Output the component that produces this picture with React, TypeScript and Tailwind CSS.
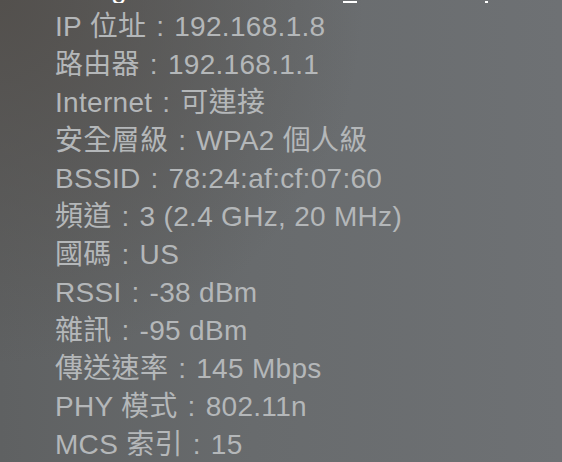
const ROWS: [string, string][] = [
  ["IP 位址", "192.168.1.8"],
  ["路由器", "192.168.1.1"],
  ["Internet", "可連接"],
  ["安全層級", "WPA2 個人級"],
  ["BSSID", "78:24:af:cf:07:60"],
  ["頻道", "3 (2.4 GHz, 20 MHz)"],
  ["國碼", "US"],
  ["RSSI", "-38 dBm"],
  ["雜訊", "-95 dBm"],
  ["傳送速率", "145 Mbps"],
  ["PHY 模式", "802.11n"],
  ["MCS 索引", "15"],
];

export default function App() {
  return (
    <div
      className="w-[562px] h-[462px] overflow-hidden bg-[radial-gradient(circle_at_0%_0%,#53504d_0%,rgba(83,80,77,0)_50%),linear-gradient(90deg,#5f6162_0%,#686b6d_45%,#6e7174_100%)]"
      style={{ fontFamily: '"Liberation Sans", "Noto Sans CJK TC", sans-serif' }}
    >
      {/* network name row, cut off by the crop */}
      <div className="h-[3px] overflow-hidden flex items-end">
        <div className="flex items-end w-full text-[28px] leading-[28px] text-white">
          <span className="ml-[36px] w-[30px]">✓</span>
          <span>Ming-Home</span>
          <span className="ml-auto mr-[128px] w-[14px] h-[2px] bg-white" />
          <span className="mr-[74px] w-[3px] h-[2px] bg-white" />
        </div>
      </div>
      <div className="pt-[5px] pl-[55px] text-[28px] leading-[38px] tracking-[0.3px] text-[#b4b7b9]">
        {ROWS.map(([k, v]) => (
          <div key={k} className="whitespace-nowrap">
            {k}
            <span className="inline-block w-[28px] text-center">:</span>
            {v}
          </div>
        ))}
      </div>
    </div>
  );
}
